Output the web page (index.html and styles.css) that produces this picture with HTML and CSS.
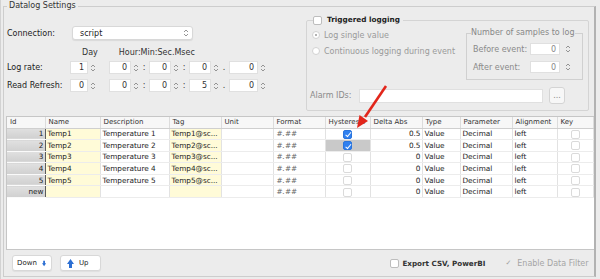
FILE: index.html
```html
<!DOCTYPE html>
<html lang="en">
<head>
    <meta charset="UTF-8">
    <title>Datalog Settings</title>
    <link rel="stylesheet" href="styles.css">
</head>
<body>
    <div class="window">
        <fieldset class="settings">
            <legend>Datalog Settings</legend>

            <div class="top">
                <div class="timing">
                    <div class="row conn">
                        <span class="lbl">Connection:</span>
                        <div class="select">script
                            <svg class="updown" width="6" height="10" viewBox="0 0 6 10"><path d="M1 4 L3 2 L5 4 M1 6 L3 8 L5 6"/></svg>
                        </div>
                    </div>
                    <div class="row heads">
                        <span class="h-day">Day</span>
                        <span class="h-time">Hour:Min:Sec.Msec</span>
                    </div>
                    <div class="row times">
                        <span class="lbl">Log rate:</span>
                        <div class="spin"><span class="box w-day">1</span><svg class="updown" width="6" height="10" viewBox="0 0 6 10"><path d="M1 4 L3 2 L5 4 M1 6 L3 8 L5 6"/></svg></div>
                        <div class="spin first"><span class="box w-t">0</span><svg class="updown" width="6" height="10" viewBox="0 0 6 10"><path d="M1 4 L3 2 L5 4 M1 6 L3 8 L5 6"/></svg></div>
                        <span class="sep">:</span>
                        <div class="spin"><span class="box w-t">0</span><svg class="updown" width="6" height="10" viewBox="0 0 6 10"><path d="M1 4 L3 2 L5 4 M1 6 L3 8 L5 6"/></svg></div>
                        <span class="sep">:</span>
                        <div class="spin"><span class="box w-t">0</span><svg class="updown" width="6" height="10" viewBox="0 0 6 10"><path d="M1 4 L3 2 L5 4 M1 6 L3 8 L5 6"/></svg></div>
                        <span class="sep">.</span>
                        <div class="spin"><span class="box w-ms">0</span><svg class="updown" width="6" height="10" viewBox="0 0 6 10"><path d="M1 4 L3 2 L5 4 M1 6 L3 8 L5 6"/></svg></div>
                    </div>
                    <div class="row times second">
                        <span class="lbl">Read Refresh:</span>
                        <div class="spin"><span class="box w-day">0</span><svg class="updown" width="6" height="10" viewBox="0 0 6 10"><path d="M1 4 L3 2 L5 4 M1 6 L3 8 L5 6"/></svg></div>
                        <div class="spin first"><span class="box w-t">0</span><svg class="updown" width="6" height="10" viewBox="0 0 6 10"><path d="M1 4 L3 2 L5 4 M1 6 L3 8 L5 6"/></svg></div>
                        <span class="sep">:</span>
                        <div class="spin"><span class="box w-t">0</span><svg class="updown" width="6" height="10" viewBox="0 0 6 10"><path d="M1 4 L3 2 L5 4 M1 6 L3 8 L5 6"/></svg></div>
                        <span class="sep">:</span>
                        <div class="spin"><span class="box w-t">5</span><svg class="updown" width="6" height="10" viewBox="0 0 6 10"><path d="M1 4 L3 2 L5 4 M1 6 L3 8 L5 6"/></svg></div>
                        <span class="sep">.</span>
                        <div class="spin"><span class="box w-ms">0</span><svg class="updown" width="6" height="10" viewBox="0 0 6 10"><path d="M1 4 L3 2 L5 4 M1 6 L3 8 L5 6"/></svg></div>
                    </div>
                </div>

                <!-- Triggered logging -->
                <fieldset class="trigger">
                    <legend><span class="cb"></span>Triggered logging</legend>
                    <div class="trig-main">
                        <div class="radios">
                            <div class="radio-row"><span class="radio on"></span>Log single value</div>
                            <div class="radio-row"><span class="radio"></span>Continuous logging during event</div>
                        </div>
                        <fieldset class="samples">
                            <legend>Number of samples to log</legend>
                            <div class="sample-row">
                                <span class="s-lbl">Before event:</span>
                                <span class="box w-s">0</span>
                                <svg class="updown" width="6" height="10" viewBox="0 0 6 10"><path d="M1 4 L3 2 L5 4 M1 6 L3 8 L5 6"/></svg>
                            </div>
                            <div class="sample-row">
                                <span class="s-lbl">After event:</span>
                                <span class="box w-s">0</span>
                                <svg class="updown" width="6" height="10" viewBox="0 0 6 10"><path d="M1 4 L3 2 L5 4 M1 6 L3 8 L5 6"/></svg>
                            </div>
                        </fieldset>
                    </div>
                    <div class="alarm">
                        <span class="a-lbl">Alarm IDs:</span>
                        <span class="a-input"></span>
                        <span class="a-btn">...</span>
                    </div>
                </fieldset>
            </div>

            <!-- Tag table -->
            <div class="grid">
                <table>
                    <colgroup>
                        <col class="c-id"><col class="c-name"><col class="c-desc"><col class="c-tag">
                        <col class="c-unit"><col class="c-fmt"><col class="c-hys"><col class="c-delta">
                        <col class="c-type"><col class="c-param"><col class="c-align"><col class="c-key">
                    </colgroup>
                    <thead>
                        <tr>
                            <th>Id</th><th>Name</th><th>Description</th><th>Tag</th><th>Unit</th><th>Format</th>
                            <th>Hysteresis</th><th>Delta Abs</th><th>Type</th><th>Parameter</th><th>Alignment</th><th>Key</th>
                        </tr>
                    </thead>
                    <tbody>
                        <tr>
                            <td class="id">1</td><td class="yel">Temp1</td><td>Temperature 1</td><td class="yel">Temp1@sc...</td><td></td><td class="fmt">#.##</td>
                            <td class="chk"><span class="tick on"></span></td><td class="num">0.5</td><td>Value</td><td>Decimal</td><td>left</td><td class="chk"><span class="tick"></span></td>
                        </tr>
                        <tr>
                            <td class="id">2</td><td class="yel">Temp2</td><td>Temperature 2</td><td class="yel">Temp2@sc...</td><td></td><td class="fmt">#.##</td>
                            <td class="chk sel"><span class="tick on"></span></td><td class="num">0.5</td><td>Value</td><td>Decimal</td><td>left</td><td class="chk"><span class="tick"></span></td>
                        </tr>
                        <tr>
                            <td class="id">3</td><td class="yel">Temp3</td><td>Temperature 3</td><td class="yel">Temp3@sc...</td><td></td><td class="fmt">#.##</td>
                            <td class="chk"><span class="tick"></span></td><td class="num">0</td><td>Value</td><td>Decimal</td><td>left</td><td class="chk"><span class="tick"></span></td>
                        </tr>
                        <tr>
                            <td class="id">4</td><td class="yel">Temp4</td><td>Temperature 4</td><td class="yel">Temp4@sc...</td><td></td><td class="fmt">#.##</td>
                            <td class="chk"><span class="tick"></span></td><td class="num">0</td><td>Value</td><td>Decimal</td><td>left</td><td class="chk"><span class="tick"></span></td>
                        </tr>
                        <tr>
                            <td class="id">5</td><td class="yel">Temp5</td><td>Temperature 5</td><td class="yel">Temp5@sc...</td><td></td><td class="fmt">#.##</td>
                            <td class="chk"><span class="tick"></span></td><td class="num">0</td><td>Value</td><td>Decimal</td><td>left</td><td class="chk"><span class="tick"></span></td>
                        </tr>
                        <tr>
                            <td class="id">new</td><td class="yel"></td><td></td><td class="yel"></td><td></td><td class="fmt">#.##</td>
                            <td class="chk"><span class="tick"></span></td><td class="num">0</td><td>Value</td><td>Decimal</td><td>left</td><td class="chk"><span class="tick"></span></td>
                        </tr>
                    </tbody>
                </table>
            </div>

            <div class="bottom">
                <button class="btn">Down
                    <svg width="7" height="9" viewBox="0 0 7 9"><path d="M2 0 H5 V4 H7 L3.5 9 L0 4 H2 Z"/></svg>
                </button>
                <button class="btn">
                    <svg width="7" height="9" viewBox="0 0 7 9"><path d="M2 9 H5 V5 H7 L3.5 0 L0 5 H2 Z"/></svg>
                    Up
                </button>
                <span class="spacer"></span>
                <span class="check-opt"><span class="cb"></span>Export CSV, PowerBI</span>
                <span class="check-opt off"><span class="mark">&#10003;</span>Enable Data Filter</span>
            </div>
        </fieldset>

        <!-- red pointer drawn over the screenshot -->
        <svg class="pointer" width="600" height="279" viewBox="0 0 600 279">
            <line x1="385" y1="86" x2="364" y2="117" />
            <polygon points="356,128 367,121 358.5,115" />
        </svg>
    </div>
</body>
</html>
```

FILE: styles.css
```css
* {
    margin: 0;
    padding: 0;
    box-sizing: border-box;
}
body {
    width: 600px;
    height: 279px;
    overflow: hidden;
    background-color: #ececec;
    font-family: "DejaVu Sans", sans-serif;
    font-size: 8px;
    color: #222;
}
.window {
    position: relative;
    height: 279px;
    padding-left: 2px;
    border-left: 1px solid #d2d2d2;
}
.settings {
    width: 592px;
    height: 277px;
    border: 1px solid #cdcdcd;
    border-right: 2px solid #b2b2b2;
}
.settings > legend {
    margin-left: 3px;
    padding: 0 2px;
    line-height: 12px;
    color: #333;
}
.top {
    display: flex;
    height: 101px;
}
.timing {
    width: 302px;
    padding-left: 3px;
}
.row {
    display: flex;
    align-items: center;
}
.lbl {
    width: 63px;
}
.conn {
    margin-top: 14px;
    height: 14px;
}
.select {
    display: flex;
    align-items: center;
    justify-content: space-between;
    width: 121px;
    height: 14px;
    margin-left: 2px;
    padding: 0 3px 0 7px;
    background: #fff;
    border: 1px solid #d8d8d8;
    border-radius: 3px;
    box-shadow: 0 1px 1px rgba(0, 0, 0, 0.08);
}
.updown {
    fill: none;
    stroke: #8a8a8a;
    stroke-width: 0.9;
    flex-shrink: 0;
}
.heads {
    margin-top: 6px;
    height: 12px;
    color: #333;
}
.h-day {
    margin-left: 75px;
}
.h-time {
    margin-left: 21px;
}
.times {
    margin-top: 3px;
    height: 13px;
}
.times.second {
    margin-top: 5px;
}
.spin {
    display: flex;
    align-items: center;
    gap: 2px;
}
.spin.first {
    margin-left: 13px;
}
.box {
    display: inline-block;
    height: 13px;
    line-height: 12px;
    padding-right: 3px;
    text-align: right;
    background: #fff;
    border: 1px solid #e0e0e0;
    color: #333;
}
.w-day { width: 18px; }
.w-t { width: 22px; }
.w-ms { width: 29px; }
.w-s { width: 30px; height: 12px; line-height: 11px; color: #888; }
.sep {
    width: 10px;
    text-align: center;
    color: #333;
}

/* Triggered logging */
.trigger {
    width: 283px;
    height: 96px;
    margin-top: 3px;
    border: 1px solid #d4d4d4;
    border-radius: 2px;
}
.trigger > legend {
    display: flex;
    align-items: center;
    margin-left: 6px;
    padding-right: 3px;
    line-height: 10px;
    font-weight: bold;
    font-size: 7.3px;
    color: #222;
}
.cb {
    display: inline-block;
    width: 9px;
    height: 9px;
    margin-right: 5px;
    background: #fff;
    border: 1px solid #bdbdbd;
    border-radius: 2px;
}
.trig-main {
    display: flex;
    height: 55px;
}
.radios {
    width: 159px;
    padding: 5px 0 0 5px;
    color: #9a9a9a;
}
.radio-row {
    display: flex;
    align-items: center;
    height: 10px;
    margin-bottom: 6px;
}
.radio {
    position: relative;
    width: 8px;
    height: 8px;
    margin-right: 4px;
    border-radius: 50%;
    background: #fff;
    border: 1px solid #d2d2d2;
}
.radio.on::after {
    content: "";
    position: absolute;
    left: 2px;
    top: 2px;
    width: 2px;
    height: 2px;
    border-radius: 50%;
    background: #9a9a9a;
}
.samples {
    width: 117px;
    height: 52px;
    margin-top: 3px;
    border: 1px solid #d0d0d0;
}
.samples > legend {
    margin-left: 4px;
    line-height: 10px;
    color: #888;
}
.sample-row {
    display: flex;
    align-items: center;
    gap: 5px;
    height: 12px;
    margin-top: 5px;
    padding-left: 6px;
    color: #8a8a8a;
}
.sample-row + .sample-row {
    margin-top: 6px;
}
.s-lbl {
    width: 57px;
    margin-right: -5px;
}
.alarm {
    display: flex;
    align-items: center;
    height: 17px;
    margin-top: 7px;
    padding-left: 3px;
    color: #8a8a8a;
}
.a-lbl {
    width: 49px;
}
.a-input {
    width: 184px;
    height: 14px;
    background: #fff;
    border: 1px solid #e0e0e0;
}
.a-btn {
    width: 16px;
    height: 17px;
    margin-left: 6px;
    line-height: 15px;
    text-align: center;
    background: #f7f7f7;
    border: 1px solid #d4d4d4;
    border-radius: 3px;
    color: #888;
}

/* Table */
.grid {
    height: 134px;
    margin: 3px 0 0 2px;
    background: #fff;
    border: 1px solid #c6c6c6;
    border-right: none;
}
table {
    width: 586px;
    table-layout: fixed;
    border-collapse: collapse;
    font-size: 7.3px;
}
.c-id { width: 38px; }
.c-name { width: 55px; }
.c-desc { width: 69px; }
.c-tag { width: 52px; }
.c-unit { width: 52px; }
.c-fmt { width: 52px; }
.c-hys { width: 45px; }
.c-delta { width: 52px; }
.c-type { width: 38px; }
.c-param { width: 52px; }
.c-align { width: 45px; }
.c-key { width: 36px; }
th {
    height: 11px;
    padding-left: 3px;
    text-align: left;
    font-weight: normal;
    font-size: 7px;
    color: #333;
    background: #f7f7f7;
    border-right: 1px solid #dcdcdc;
    border-bottom: 1px solid #cfcfcf;
    white-space: nowrap;
    overflow: hidden;
}
td {
    height: 11.6px;
    padding: 0 2px;
    border-right: 1px solid #e2e2e2;
    border-bottom: 1px solid #ececec;
    white-space: nowrap;
    overflow: hidden;
    color: #222;
}
td.id {
    padding: 0 1px 0 0;
    text-align: right;
    background: linear-gradient(#e0e0e0, #d0d0d0);
    border-right: 1px solid #5c5c5c;
    border-bottom: 1px solid #fafafa;
}
td.yel {
    background: #fffbd8;
}
td.fmt {
    padding-left: 3px;
    font-style: italic;
    color: #666;
}
td.num {
    text-align: right;
    padding-right: 1px;
}
td.chk {
    text-align: center;
    padding: 0;
}
td.sel {
    background: #c9c9c9;
}
.tick {
    display: inline-block;
    position: relative;
    width: 9px;
    height: 9px;
    vertical-align: middle;
    background: #fff;
    border: 1px solid #dadada;
    border-radius: 2px;
}
.tick.on {
    background: #2f80f0;
    border-color: #2a74dc;
}
.tick.on::after {
    content: "";
    position: absolute;
    left: 2.5px;
    top: 0.5px;
    width: 2px;
    height: 4.5px;
    border: solid #fff;
    border-width: 0 1.2px 1.2px 0;
    transform: rotate(40deg);
}

/* Bottom bar */
.bottom {
    display: flex;
    align-items: center;
    height: 26px;
    padding: 0 5px 0 8px;
}
.btn {
    display: flex;
    align-items: center;
    gap: 5px;
    height: 16px;
    margin-right: 8px;
    padding: 0 5px 0 4px;
    font-family: "DejaVu Sans", sans-serif;
    font-size: 7px;
    color: #222;
    background: #fff;
    border: 1px solid #d8d8d8;
    border-radius: 3px;
    box-shadow: 0 1px 1px rgba(0, 0, 0, 0.06);
}
.btn:first-child {
    width: 40px;
}
.btn:nth-child(2) {
    width: 41px;
    padding-left: 6px;
}
.btn svg {
    fill: #2c6fd3;
}
.spacer {
    flex: 1;
}
.check-opt {
    display: flex;
    align-items: center;
    margin-left: 20px;
    font-weight: bold;
    font-size: 7.2px;
    color: #333;
}
.check-opt .cb {
    margin-right: 3px;
}
.check-opt.off {
    color: #a5a5a5;
    font-weight: normal;
    font-size: 8px;
}
.mark {
    margin-right: 6px;
    font-size: 7px;
    color: #a0a0a0;
}

.pointer {
    position: absolute;
    left: 0;
    top: 0;
    pointer-events: none;
}
.pointer line {
    stroke: #e2261b;
    stroke-width: 2.6;
}
.pointer polygon {
    fill: #e2261b;
}
```
